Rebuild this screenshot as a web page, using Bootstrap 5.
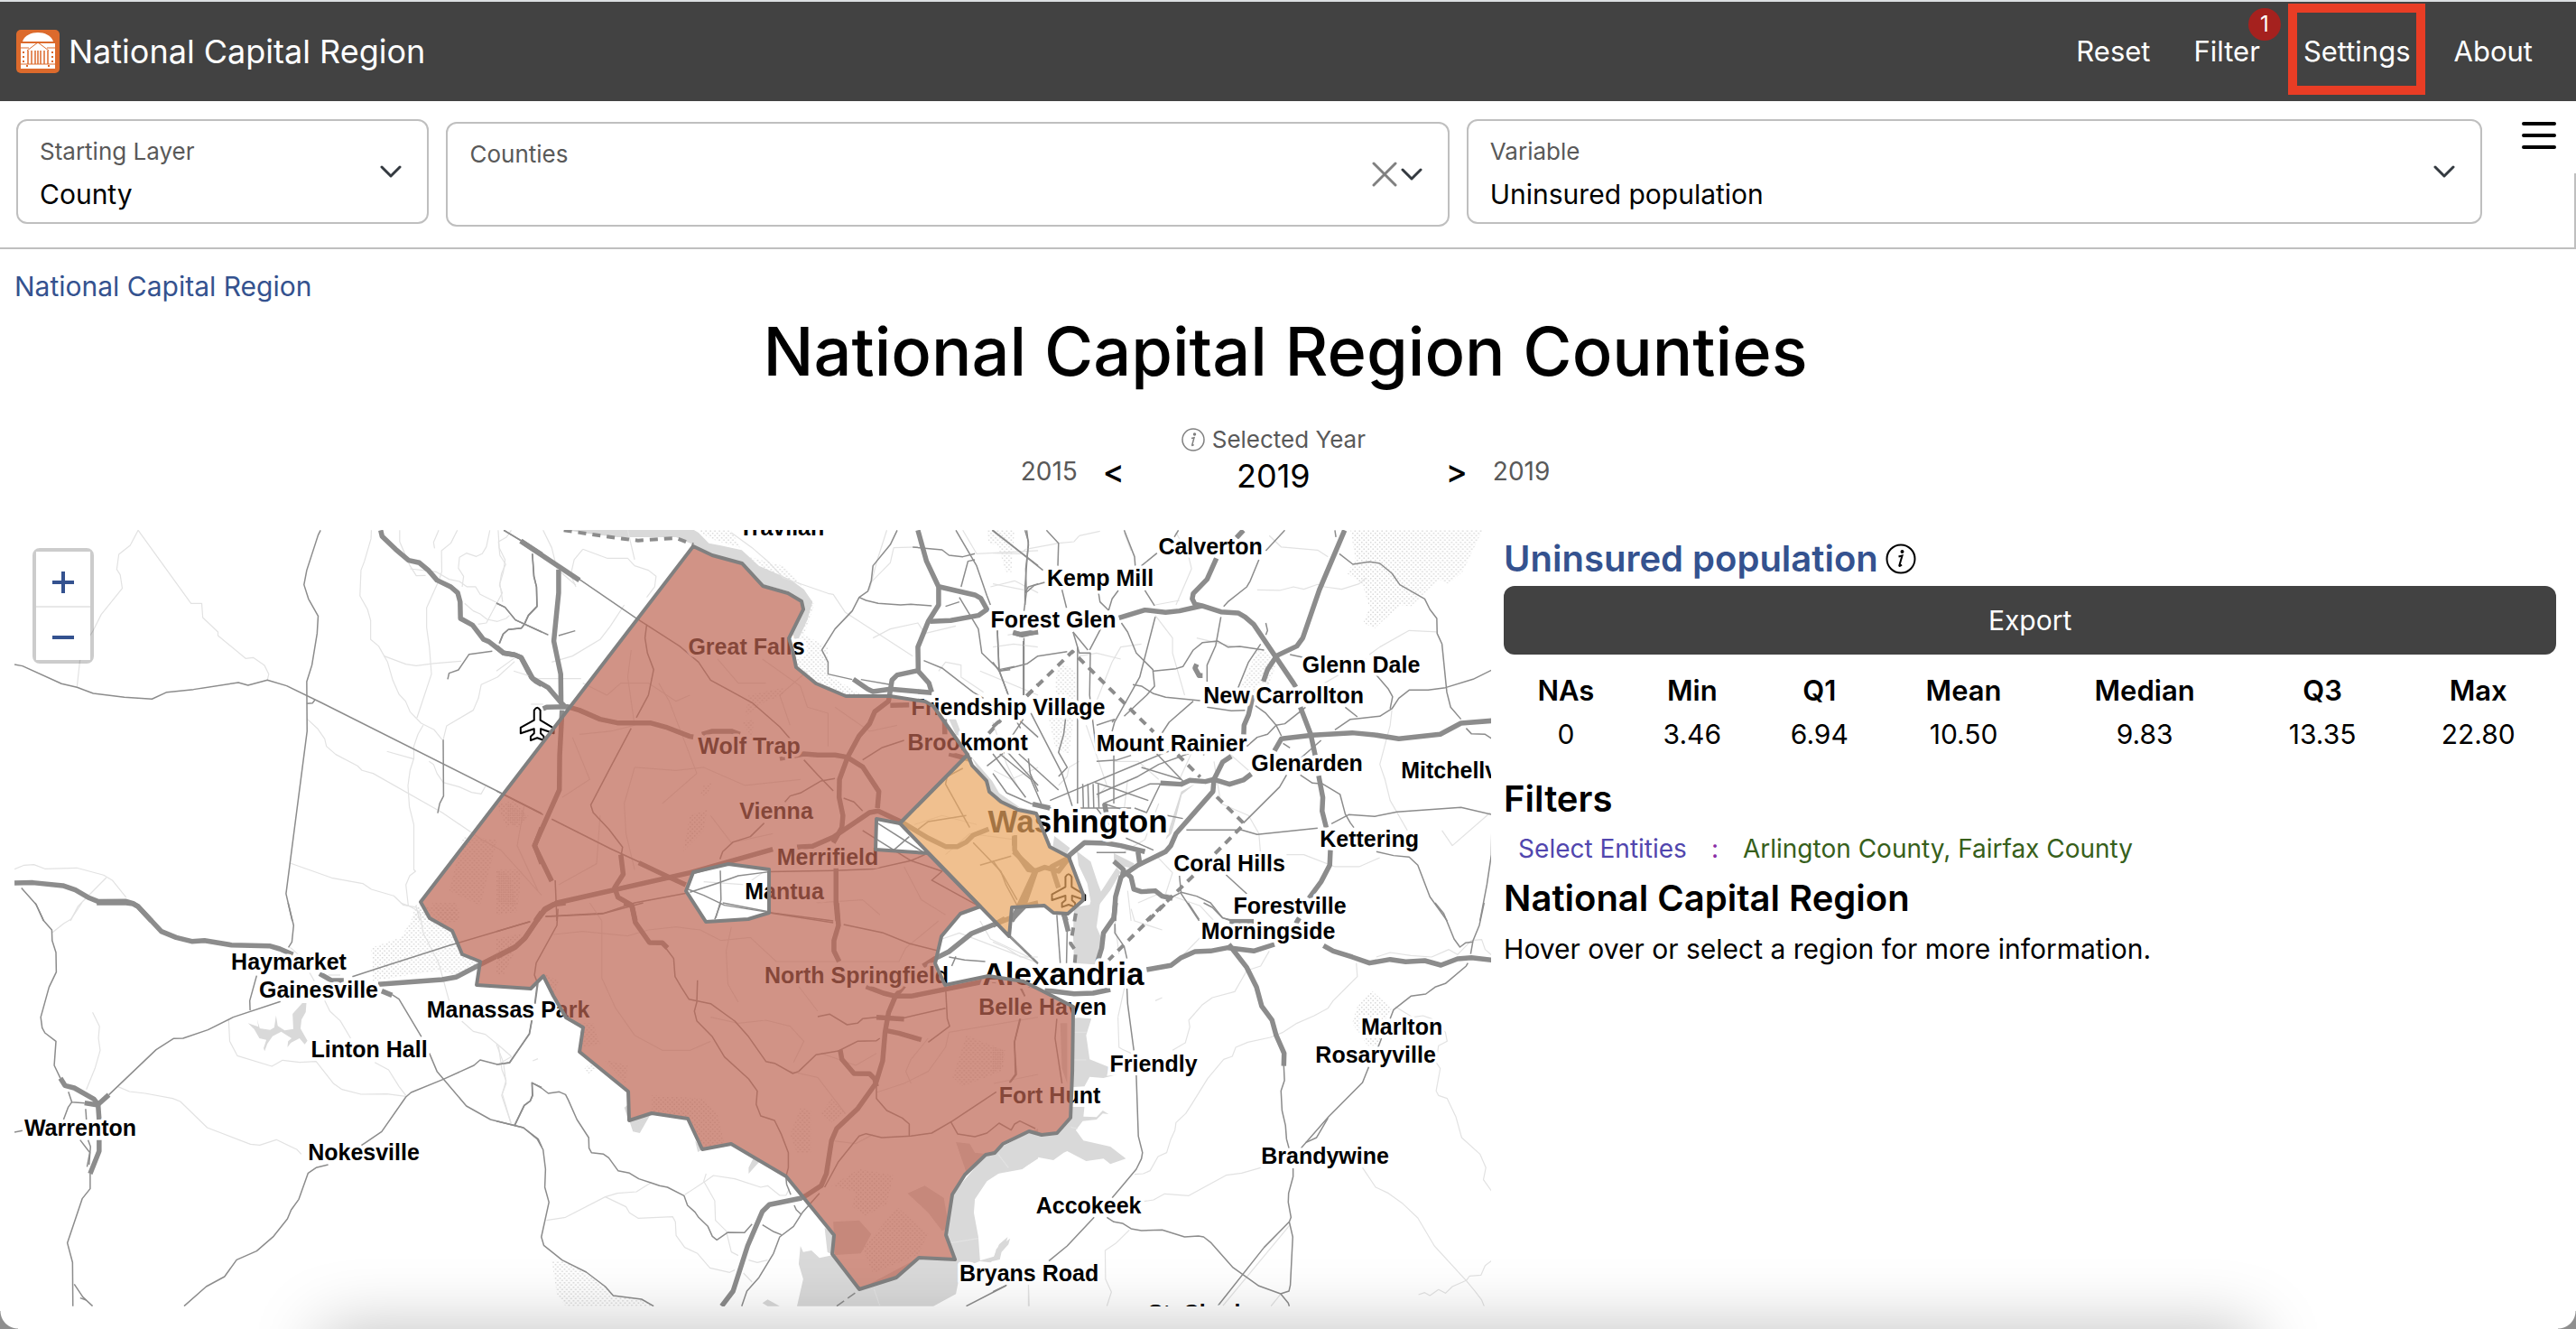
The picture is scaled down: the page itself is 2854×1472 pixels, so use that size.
<!DOCTYPE html>
<html lang="en">
<head>
<meta charset="utf-8">
<meta name="viewport" content="width=device-width, initial-scale=1">
<title>National Capital Region</title>
<link href="https://cdn.jsdelivr.net/npm/bootstrap@5.3.0/dist/css/bootstrap.min.css" rel="stylesheet">
<style>
  :root { --ink:#000; --muted:#595959; --line:#bfbfbf; --dark:#424242; --link:#34528f; }
  body { font-family: Inter, "Liberation Sans", sans-serif; font-size:30px; line-height:40px; color:var(--ink); background:#fff; }
  .topbar { background:var(--dark); height:112px; border-top:2px solid #dcdfe2; padding:0 18px; }
  .brand-text { font-size:36px; color:#fff; text-decoration:none; gap:10px; }
  .topbar .menu-btn { background:none; border:0; color:#fff; padding:0; font-size:31px; line-height:40px; }
  .menu-list { gap:48px; padding-right:30px; }
  .ringed { position:relative; }
  .ringed::after { content:""; position:absolute; top:-33px; left:-17px; right:-16px; height:101px; border:10px solid #e93d25; }
  .count { position:absolute; top:-28px; right:-23px; width:36px; height:36px; border-radius:50%; background:#a5211e; color:#fff; font-size:24px; line-height:36px; text-align:center; }
  .toolbar { border-bottom:2px solid var(--line); gap:19px; padding-left:18px; min-height:164px; }
  .field { border:2px solid var(--line); border-radius:12px; height:116px; margin-top:20px; padding:0 28px 0 24px; }
  .field-a { flex:401 1 0; } .field-b { flex:1054 1 0; margin-top:23px; } .field-c { flex:1068 1 0; }
  .field-body { padding-top:16px; height:112px; min-width:0; }
  .field label { font-size:26px; line-height:36px; color:var(--muted); }
  .field select, .field input { appearance:none; border:0; background:none; padding:0; width:100%; font-size:30px; line-height:40px; height:58px; color:#000; outline:0; }
  .plain { background:none; border:0; padding:0; line-height:1; display:flex; }
  .menu-toggle { padding:8px; margin:14px 0 16px 17px; }
  .side { width:85px; }
  .side-edge { border-right:2px solid var(--line); }
  .crumb { color:var(--link); text-decoration:none; }
  .page { padding:21px 22px 0 16px; }
  h1 { font-size:74px; line-height:96px; font-weight:500; }
  .years { margin-top:32px; margin-bottom:38px; }
  .year-end { font-size:28px; line-height:54px; color:var(--muted); }
  .step { background:none; border:0; padding:0; font-size:36px; line-height:54px; font-weight:500; width:24px; }
  .year-mid { width:356px; padding-right:26px; }
  .year-mid label { font-size:26px; line-height:36px; color:var(--muted); }
  .year-mid output { font-size:36px; line-height:44px; }
  .map-col { flex:0 0 58.1%; height:860px; position:relative; overflow:hidden; min-width:0; }
  .info-col { flex:1 1 0; min-width:0; padding-top:8px; }
  .split { gap:14px; }
  .map-col > svg { width:100%; height:100%; display:block; }
  .zoomer { position:absolute; left:20px; top:20px; width:68px; border:4px solid rgba(0,0,0,.2); border-radius:8px; background-clip:padding-box; }
  .zoomer button { display:flex; align-items:center; justify-content:center; width:100%; height:60px; border:0; background:#fff; padding:8px 0 0; }
  .zoomer button + button { border-top:2px solid #e8e8e8; }
  h2 { font-size:40px; line-height:48px; font-weight:600; }
  h2 a, h2 a:hover { color:var(--link); }
  .export { background:var(--dark); color:#fff; height:76px; border-radius:12px; border:0; margin-top:6px; }
  .stats { margin-top:16px; table-layout:fixed; text-align:center; }
  .stats th, .stats td { height:48px; padding:0; }
  .stats th { font-weight:600; font-size:31px; }
  .filter-row { font-size:28px; margin:11px 0; padding-left:16px; }
  .filter-row .what { color:#5146ae; } .filter-row .sep { color:#8a2da5; padding:0 27px; } .filter-row .val { color:#375f1b; }
  .roads polyline, .roads path { fill:none; vector-effect:non-scaling-stroke; stroke-linejoin:round; }
  .a polyline, polyline.a { stroke:#8c8c8c; stroke-width:5.5px; }
  .b polyline { stroke:#8c8c8c; stroke-width:1.5px; }
  .c polyline { stroke:#e2e2e2; stroke-width:1.2px; }
  .d polyline { stroke:#8c8c8c; stroke-width:4px; stroke-dasharray:9 7; }
  .roads .w { fill:#d9d9d9; }
  .roads .h { fill:url(#dots); }
  .roads .p { fill:#fff; stroke:#000; stroke-width:2px; }
  .towns text { font:bold 25px "Liberation Sans", sans-serif; text-anchor:middle; fill:#000; stroke:#fff; stroke-width:7px; stroke-linejoin:round; paint-order:stroke; }
  .towns text.big { font-size:35px; }
  .regions path { stroke:#808080; stroke-width:4px; stroke-linejoin:round; fill-rule:evenodd; fill-opacity:.7; }
  .dock-shade { position:fixed; top:100%; left:12.5%; right:12.5%; height:80px; box-shadow:0 0 75px rgba(0,0,0,.25); pointer-events:none; }
  .corner { position:fixed; bottom:0; width:20px; height:20px; pointer-events:none; }
  .corner-l { left:0; background:radial-gradient(circle at 100% 0, transparent 19px, #8f8f8f 20px); }
  .corner-r { right:0; background:radial-gradient(circle at 0 0, transparent 19px, #8f8f8f 20px); }
</style>
</head>
<body>
<nav class="topbar d-flex align-items-center justify-content-between">
  <a href="#" class="brand-text d-flex align-items-center">
    <svg width="48" height="48" viewBox="0 0 48 48" aria-hidden="true">
      <rect width="48" height="48" rx="5" fill="#dc6a2c"/>
      <path fill="#fff" d="M7 13C9 6 17 3 24 3s15 3 17 10zM5 15h38v28H5z"/>
      <path stroke="#dc6a2c" fill="none" d="M5 20h9M34 20h9M5 38h38M12 23L24 14l12 9"/>
      <path stroke="#dc6a2c" stroke-width="1.500" fill="none" d="M13 23v15M17 23v15M21 23v15M27 23v15M31 23v15M35 23v15M24 23v15"/>
      <path stroke="#dc6a2c" stroke-width="2" stroke-dasharray="2 3" fill="none" d="M8 24v12M40 24v12M12 39v4M36 39v4"/>
    </svg>National Capital Region</a>
  <div class="menu-list d-flex align-items-center">
    <button class="menu-btn" type="button">Reset</button>
    <button class="menu-btn position-relative" type="button">Filter<span class="count">1</span></button>
    <button class="menu-btn ringed" type="button">Settings</button>
    <button class="menu-btn" type="button">About</button>
  </div>
</nav>

<div class="toolbar d-flex align-items-start">
  <div class="field field-a d-flex align-items-center">
    <div class="field-body flex-grow-1 d-flex flex-column"><label for="layer">Starting Layer</label><select id="layer"><option>County</option></select></div>
    <svg width="24" height="16" viewBox="0 0 24 16" fill="none" stroke="#343a40" stroke-width="3" stroke-linecap="round" stroke-linejoin="round"><path d="M2 3l10 10L22 3"/></svg>
  </div>
  <div class="field field-b d-flex align-items-center">
    <div class="field-body flex-grow-1 d-flex flex-column"><label for="counties">Counties</label><input id="counties" type="text"></div>
    <div class="d-flex align-items-center gap-1">
      <button class="plain" type="button" aria-label="Clear"><svg width="28" height="28" viewBox="0 0 28 28" stroke="#808080" stroke-width="3" stroke-linecap="round"><path d="M2 2l24 24M26 2L2 26"/></svg></button>
      <button class="plain" type="button" aria-label="Open"><svg width="24" height="16" viewBox="0 0 24 16" fill="none" stroke="#343a40" stroke-width="3" stroke-linecap="round" stroke-linejoin="round"><path d="M2 3l10 10L22 3"/></svg></button>
    </div>
  </div>
  <div class="field field-c d-flex align-items-center">
    <div class="field-body flex-grow-1 d-flex flex-column"><label for="variable">Variable</label><select id="variable"><option>Uninsured population</option></select></div>
    <svg width="24" height="16" viewBox="0 0 24 16" fill="none" stroke="#343a40" stroke-width="3" stroke-linecap="round" stroke-linejoin="round"><path d="M2 3l10 10L22 3"/></svg>
  </div>
  <div class="side d-flex flex-column align-self-stretch">
    <button class="plain menu-toggle" type="button" aria-label="Menu"><svg width="38" height="34" viewBox="0 0 38 34" stroke="#000" stroke-width="4" stroke-linecap="round"><path d="M2 3h34M2 16h34M2 29h34"/></svg></button>
    <div class="side-edge flex-grow-1"></div>
  </div>
</div>

<main class="page">
  <a href="#" class="crumb d-block">National Capital Region</a>
  <h1 class="text-center mb-0 mt-1">National Capital Region Counties</h1>
  <div class="years d-flex justify-content-center align-items-end">
    <span class="year-end me-4">2015</span>
    <button class="step ms-1" type="button">&lt;</button>
    <div class="year-mid d-flex flex-column align-items-center">
      <label for="yr" class="d-flex align-items-center gap-2"><svg width="26" height="26" viewBox="0 0 26 26" fill="none" stroke="#808080" stroke-width="1.5"><circle cx="13" cy="13" r="12"/><path d="M11 11.500l3-.8-2.300 8.300q0 1 2-.5" /><circle cx="14.500" cy="7" r="1" fill="#808080"/></svg>Selected Year</label>
      <output id="yr">2019</output>
    </div>
    <button class="step me-1" type="button">&gt;</button>
    <span class="year-end ms-4">2019</span>
  </div>

  <div class="split d-flex">
    <div class="map-col">
      <svg viewBox="16 587 1636 860" preserveAspectRatio="xMidYMid slice" role="img" aria-label="Map of counties">
        <defs><pattern id="dots" width="5" height="5" patternUnits="userSpaceOnUse" patternTransform="scale(2.6 3)"><path d="M0 0h1.500v1.500h-1.500zM2.500 2.500h1.500v1.500h-1.500z" fill="#d8d8d8"/></pattern></defs>
        <g class="roads">
        <!-- north west -->
        <g transform="translate(0 570) scale(.3827 .3333)">
          <path class="h" d="M1195 1350L1210 1300 1330 1310 1330 1350zM1340 1070L1440 1080 1390 1300 1300 1250zM1440 1180L1510 1180 1500 1300 1440 1290zM1470 960L1530 1000 1500 1040 1470 1020z"/>
          <g class="c">
            <polyline points="400,52 377,102 344,132 338,182 348,200 354,245 293,332 270,385 240,440 231,488 223,572"/>
            <polyline points="400,52 553,295 584,295 587,342 631,390 631,402 711,478 733,475 765,500 778,530 774,550"/>
            <polyline points="1075,52 1074,80 1055,155 1045,185 1042,270 1064,315 1073,352 1073,415 1096,437 1122,490 1137,550 1155,597 1174,620 1187,655 1219,693 1257,715 1280,748"/>
            <polyline points="1157,52 1157,90 1187,170 1205,203 1232,202"/><polyline points="1270,52 1255,92 1258,112"/>
            <polyline points="1324,52 1305,95 1278,120 1279,190 1270,220 1235,310 1235,375 1243,440 1249,530 1207,675"/>
            <polyline points="1418,52 1408,107 1396,130 1379,139 1350,128 1330,142 1327,178 1342,205 1338,240"/>
            <polyline points="1480,52 1466,75 1443,90 1447,135 1464,165 1452,195 1446,235 1454,260 1437,297 1408,360 1384,364"/>
            <polyline points="1187,180 1262,190 1300,215 1330,222 1352,240 1377,240 1390,265 1437,292"/>
            <polyline points="1112,470 1175,497 1205,502 1255,495 1335,487"/><polyline points="1490,488 1440,540 1393,565 1385,610 1370,650 1293,702 1283,748"/>
            <polyline points="1345,295 1370,320 1390,330 1410,348 1440,355 1465,345 1475,335"/>
            <polyline points="890,680 920,712 940,745 945,770 972,797 1035,835 1048,850 1080,860 1280,990 1395,1080 1450,1115 1568,1265"/>
            <polyline points="1225,700 1210,730 1198,770 1198,810 1187,850 1181,900 1185,970 1198,1030 1198,1180 1203,1185 1186,1200 1175,1230 1182,1300"/>
            <polyline points="1120,787 1198,812"/><polyline points="1242,820 1255,830 1265,860 1283,890 1330,905 1365,923 1393,928 1405,903"/>
            <polyline points="840,1158 960,1207 1050,1226 1075,1245 1140,1267 1167,1297 1205,1305 1215,1350"/>
            <polyline points="42,1178 70,1165 98,1163 130,1177 222,1174 300,1198 325,1215 365,1272"/><polyline points="308,1206 240,1285 225,1303 204,1350"/>
          </g>
          <g class="b">
            <polyline points="42,498 65,503 178,562 223,574 270,594 360,607 440,613 483,590 560,581 690,558 718,567 774,550 830,569 930,625 1568,993"/>
            <polyline points="928,52 921,68 888,185 880,233 893,280 921,337 918,395 903,500 888,555 889,720 828,1260 846,1350"/>
            <polyline points="888,628 905,626 912,615"/>
            <polyline points="1458,52 1512,88"/><polyline points="1541,130 1546,205 1553,240 1555,305 1530,335 1518,365 1510,377 1472,382 1457,397 1446,428"/>
            <polyline points="1437,294 1462,308 1492,350 1568,390"/><polyline points="1425,454 1358,464 1327,516 1300,527 1296,547"/>
            <polyline points="1283,748 1284,935 1273,960 1267,992"/><polyline points="62,1241 105,1296 126,1350"/>
          </g>
          <g class="a">
            <polyline points="1102,52 1106,72 1145,115 1183,152 1214,160 1240,185 1265,218 1305,240 1325,260 1332,290 1333,345 1368,367 1400,415 1415,422 1458,460 1490,466 1508,475 1538,540 1550,553 1568,565"/>
            <polyline points="1508,88 1568,133"/><polyline points="42,1224 95,1223 182,1233 218,1247 255,1272 285,1286 365,1285 385,1292 400,1303 438,1350"/>
            <polyline points="1568,1040 1548,1100 1568,1160"/><polyline points="1568,1320 1550,1350"/>
          </g>
        </g>
        <!-- north centre -->
        <g transform="translate(550 570) scale(.3827 .3333)">
          <path class="w" d="M195 50L570 50 585 60 615 95 650 103 710 118 760 170 850 215 890 248 915 290 900 350 875 412 850 412 890 310 884 284 845 255 772 232 712 160 620 130 570 100 520 75 350 75 260 62z"/>
          <path class="h" d="M580 50L680 52 705 110 620 80zM730 140L830 170 900 250 860 220 790 190zM905 270L920 300 890 400 960 440 955 530 1060 600 1010 598 930 560 870 500 855 410 880 405zM1420 52L1500 52 1490 195 1475 190 1450 100 1425 95zM730 600L830 575 830 600 780 620 720 670zM710 690L745 680 740 740zM600 900L625 890 610 935 590 930zM0 960L60 950 90 1010 30 1040zM0 1180L40 1200 60 1320 0 1330zM560 1000L610 980 600 1050 540 1120z"/>
          <path class="w" d="M1310 680l20 0 18 55-14 6zM1375 805l60 80 20 40 60 48 45 12v15l-55-10-55-35-30-50z"/>
          <g class="c">
            <polyline points="5,52 8,110 25,150 20,190 10,230 18,290"/><polyline points="135,52 160,110 175,180 230,235"/>
            <polyline points="250,115 225,150 215,200 230,240"/><polyline points="250,115 320,145 380,145 400,170 440,185 462,205 458,240 435,275"/>
            <polyline points="370,300 330,370 300,415 220,470 160,490"/><polyline points="680,60 740,110 790,160 830,210 960,262 975,265 1010,325 1205,470"/>
            <polyline points="1090,410 1140,380 1220,360 1240,395 1330,370"/><polyline points="1280,520 1300,490 1345,500 1345,540 1410,590"/><polyline points="1400,520 1568,600"/><polyline points="1080,230 1140,160 1150,110 1220,108"/>
            <polyline points="380,52 400,150"/><polyline points="1130,52 1100,160 1080,250"/><polyline points="0,520 60,470"/><polyline points="100,630 135,630"/><polyline points="50,520 120,545 245,545"/>
            <polyline points="1350,52 1390,130 1568,120"/><polyline points="1430,240 1500,220 1568,260"/><polyline points="1480,400 1568,380"/>
            <polyline points="250,560 320,600 360,560 440,560 520,620 560,600"/><polyline points="390,450 380,540 400,700 330,720 240,730"/><polyline points="470,560 500,620 560,800 580,860 540,900 480,960"/>
            <polyline points="400,840 370,960 375,1060 400,1180"/><polyline points="400,840 520,850 600,840 720,900 880,880"/><polyline points="640,480 700,560 780,560"/><polyline points="770,480 880,570 900,640 960,660 960,770"/>
            <polyline points="220,740 270,880 190,940"/><polyline points="620,1000 680,1090 800,1060"/><polyline points="80,970 60,1100 120,1250"/><polyline points="300,1000 290,1160 180,1230"/><polyline points="860,1230 930,1290 1060,1280 1110,1330"/><polyline points="1180,1170 1230,1280 1300,1330"/><polyline points="900,520 820,600 850,700"/><polyline points="980,640 1080,720 1160,700"/>
            <polyline points="1568,840 1490,880 1440,850"/><polyline points="1210,1030 1290,1000 1390,1030"/><polyline points="1300,1130 1370,1060 1500,1080"/><polyline points="600,1220 720,1230 770,1190"/>
          </g>
          <g class="b">
            <polyline points="22,52 75,90"/><polyline points="240,215 405,345 530,437 585,490 620,550 740,625 820,705 850,745"/>
            <polyline points="104,130 108,205 116,240 117,305 92,335 80,365 72,377 34,382 19,397 8,428"/><polyline points="0,294 25,308 55,350 150,400"/><polyline points="180,402 228,386"/>
            <polyline points="435,365 430,410 437,460 455,515 440,600 405,675"/><polyline points="390,710 330,840 273,965 280,990 325,1045 365,1105 360,1140"/>
            <polyline points="0,918 135,997"/><polyline points="160,1012 330,1110 415,1155"/>
            <polyline points="1160,52 1140,100 1090,170 1085,220 1075,255 1050,275 1030,320 980,380 942,450 960,490 960,530 1030,548"/>
            <polyline points="1050,275 1070,285 1105,295 1170,300 1200,298 1260,303"/><polyline points="1300,305 1340,290"/><polyline points="1330,52 1390,170 1420,270 1430,300"/><polyline points="1385,150 1365,155 1345,240"/>
            <polyline points="1205,108 1290,117 1310,135 1350,140 1385,130"/><polyline points="1435,52 1568,170"/><polyline points="1530,52 1540,90 1530,240 1530,300"/><polyline points="1568,230 1540,240 1530,260"/>
            <polyline points="1340,275 1395,380 1405,460 1455,515 1500,505"/><polyline points="1450,385 1455,515 1480,595"/><polyline points="1527,410 1527,600"/>
            <polyline points="1237,485 1290,510 1380,590 1410,610"/><polyline points="1055,548 1140,565"/><polyline points="1180,750 1115,775 1060,815"/>
            <polyline points="890,815 930,865 975,918"/><polyline points="980,877 940,885 880,925 850,935 835,955"/><polyline points="1005,942 1035,955 1060,985"/><polyline points="775,1025 735,1070 685,1088 655,1120 647,1145"/>
            <polyline points="790,1187 980,1183 1090,1178 1200,1150 1240,1130"/><polyline points="1060,1050 1200,1150 1290,1185 1260,1215 1400,1303"/><polyline points="560,1255 640,1225 700,1200 790,1187"/><polyline points="648,1183 650,1280 635,1340"/><polyline points="555,1245 600,1265 660,1298 790,1322"/><polyline points="1103,1025 1240,1125"/><polyline points="1195,1070 1150,1115"/>
            <polyline points="550,1258 400,1290 310,1325 142,1335"/><polyline points="790,1322 975,1350"/><polyline points="170,1215 175,1350"/>
            <polyline points="1350,843 1305,870 1300,895 1370,1040"/><polyline points="1380,1090 1460,1185 1475,1230 1510,1305"/><polyline points="1400,1165 1490,1135"/><polyline points="1210,1055 1250,1020 1360,1000"/>
            <polyline points="1470,790 1420,835"/><polyline points="1540,810 1545,860 1568,920"/><polyline points="1480,790 1568,900"/><polyline points="1510,680 1568,740"/><polyline points="1525,680 1490,740"/>
          </g>
          <g class="a">
            <polyline points="70,88 240,218"/><polyline points="180,183 180,260 166,420 186,530 187,625 200,640"/><polyline points="0,440 20,460 52,466 72,475 105,545 150,575 187,625"/>
            <polyline points="135,645 145,640 205,638 240,650 300,680 350,692 445,692 490,706 560,737 570,739"/><polyline points="190,650 183,800 182,915 110,1100 160,1218"/>
            <polyline points="595,730 625,720 680,720 705,730"/><polyline points="820,810 890,795 930,799 980,799 1015,806 1060,838 1107,920 1103,975"/>
            <polyline points="1220,52 1245,155 1280,240 1280,300 1250,355 1220,440 1221,518 1160,533 1145,550 1135,620 1095,655 1080,695 1050,735 1017,805 993,880 992,940 1003,1000 1000,1040 975,1090"/>
            <polyline points="1283,240 1385,267 1402,278 1420,315 1395,335 1315,352 1255,355"/><polyline points="1221,520 1252,560 1260,590"/><polyline points="1033,547 1075,580 1090,588 1140,580 1260,592"/><polyline points="1140,634 1195,632"/>
            <polyline points="116,1350 140,1315 175,1290 560,1190 800,1112"/><polyline points="870,1105 915,1102 975,1072 1080,990 1105,985 1170,1020 1250,1075 1300,1103 1335,1103 1360,1088 1380,1065 1425,1045"/>
            <polyline points="412,1157 500,1205 548,1230"/><polyline points="360,1130 367,1195 342,1240 352,1272 392,1298 402,1350"/><polyline points="983,1175 983,1290 988,1350"/><polyline points="1500,1065 1500,1115 1540,1180 1568,1185"/><polyline points="1560,1190 1530,1290 1490,1350"/><polyline points="1495,392 1515,398 1568,390"/><polyline points="1297,680 1298,730"/><polyline points="1310,795 1375,815"/>
          </g>
          <g class="d"><polyline points="195,52 350,78 410,86 520,78 570,100"/><polyline points="1425,727 1460,683"/><polyline points="1535,602 1568,565"/></g>
          <path class="p" d="M109 650Q118 632 127 650V683L166 710V727L128 712V727L137 737V750L118 742 99 750V737L109 727V712L70 727V708L109 683Z"/>
        </g>
        <!-- north east -->
        <g transform="translate(1100 570) scale(.3827 .3333)">
          <path class="h" d="M1035 50L1418 50 1360 190 1320 230 1290 215 1210 305 1180 300 1105 378 1072 360 1090 310 1070 230 1025 195 1050 150zM765 450L790 450 820 500 790 590 710 595zM190 490L240 520 240 620 220 800 180 770 160 670 185 640 180 560z"/>
          <path class="w" d="M178 1068l45 40-10 22-40-25zM243 1118l40 35 20 70 10 30 45-80 12 15-30 60-40 60-20 90-12 27h-30l25-60 20-80-10-60-25-60zM350 1125l60 35-10 15-50-12zM500 1080l45-160 40-25-38 35-20 90-10 40zM0 930l60 50 60 12-60-5z"/>
          <g class="c">
            <polyline points="0,128 80,130 95,115"/><polyline points="250,70 235,90 190,95 95,115"/><polyline points="250,70 310,55"/><polyline points="0,230 90,250"/><polyline points="380,60 400,120"/><polyline points="530,60 565,130 575,180 530,300"/>
            <polyline points="800,70 835,108 940,118 970,140"/><polyline points="765,250 830,252 870,240 900,248 940,232 960,240 1010,248 1060,230 1080,210"/><polyline points="470,300 540,285"/><polyline points="470,335 520,410 520,460 555,600"/>
            <polyline points="1285,390 1205,385 1120,440 1090,465"/><polyline points="1155,650 1150,700 1120,830 1135,880 1150,950 1200,1050"/><polyline points="850,1130 900,1130 990,1170 1060,1170 1120,1140"/>
            <polyline points="370,480 300,460 250,470"/><polyline points="0,440 60,430 130,440"/><polyline points="430,430 370,440 345,490 300,620"/><polyline points="600,730 540,880"/><polyline points="480,960 440,1080 380,1120"/><polyline points="640,820 660,960 740,1000 770,1060 775,1130"/>
            <polyline points="0,690 40,830 70,900"/><polyline points="250,820 220,840 215,870 190,900"/><polyline points="390,880 380,980"/><polyline points="470,1130 520,1190 500,1260 600,1300 640,1350"/><polyline points="390,1250 400,1350"/><polyline points="420,1290 480,1260"/><polyline points="700,600 760,580 800,560"/><polyline points="350,820 420,820 480,880"/><polyline points="590,410 700,440"/><polyline points="1300,1050 1330,1100 1440,990"/>
            <polyline points="960,560 1080,480"/><polyline points="680,790 740,850"/><polyline points="270,700 330,900 300,940"/>
          </g>
          <g class="b">
            <polyline points="0,52 145,185"/><polyline points="98,52 103,100 95,180 97,260 90,320"/><polyline points="155,52 190,95 188,170"/><polyline points="380,52 393,90 410,140 412,170"/><polyline points="475,128 430,170"/><polyline points="537,52 525,75"/>
            <polyline points="200,250 213,310"/><polyline points="150,225 120,235 95,260"/><polyline points="305,255 310,290 335,318"/><polyline points="363,252 345,280 335,318"/><polyline points="440,252 468,303"/><polyline points="845,52 790,120"/><polyline points="770,150 745,220 735,240 680,290 668,305"/>
            <polyline points="990,52 993,75"/><polyline points="1003,130 1042,165 1090,157 1120,162 1155,195 1178,233 1250,280 1265,315 1285,345 1286,395 1300,430 1314,590 1325,640 1355,680"/>
            <polyline points="790,360 795,385 790,400"/><polyline points="372,360 390,390 415,460 463,515 468,570 445,600 380,670"/><polyline points="470,340 425,540 352,690 345,720"/>
            <polyline points="465,520 530,512 550,505 580,450 607,425 650,420 680,440 715,438 785,450"/><polyline points="660,340 645,435 620,500 620,555"/><polyline points="860,465 900,475"/><polyline points="775,430 740,490 710,575"/>
            <polyline points="405,565 430,570 465,595 500,607 600,618"/><polyline points="580,620 510,690 470,760"/><polyline points="620,640 690,652 730,650"/><polyline points="1100,520 1145,580 1157,605 1150,645"/><polyline points="1445,516 1390,547 1310,575 1260,583 1205,583 1175,610 1155,645 1120,670 1055,678 1035,680 990,715"/><polyline points="1020,640 1055,672"/>
            <polyline points="760,635 790,660 820,700 835,735"/><polyline points="905,640 845,695 820,700 795,730 765,740 735,770"/><polyline points="1370,710 1385,728 1425,730 1445,745"/>
            <polyline points="0,490 18,520 100,495 130,470 215,455"/><polyline points="13,385 18,520 45,600"/><polyline points="88,420 88,600"/><polyline points="18,520 50,515"/><polyline points="232,390 250,460 282,460 280,600 300,790"/><polyline points="245,440 245,960"/><polyline points="232,390 275,450"/><polyline points="330,340 280,450"/>
            <polyline points="110,660 200,860 230,970"/><polyline points="65,680 80,710"/><polyline points="210,680 205,730 190,790 215,840 190,870"/><polyline points="345,690 352,680 300,700"/><polyline points="350,800 350,960"/><polyline points="300,820 360,815 400,800"/>
            <polyline points="0,795 95,940"/><polyline points="20,795 110,880 140,960"/><polyline points="75,795 190,915"/><polyline points="0,860 40,925 110,960 170,975"/><polyline points="165,950 500,790"/><polyline points="300,930 420,870 480,830 600,780"/><polyline points="295,890 350,910 450,950"/><polyline points="260,895 262,975"/><polyline points="275,895 277,975"/><polyline points="290,895 292,975"/><polyline points="305,895 307,975"/>
            <polyline points="375,980 320,960 455,895 490,895"/><polyline points="410,975 445,990 485,895"/><polyline points="430,840 545,880"/><polyline points="470,790 550,885"/><polyline points="615,730 610,800"/><polyline points="240,975 400,975"/><polyline points="505,1000 550,1010"/><polyline points="560,1048 720,1048 765,1063 940,1042"/>
            <polyline points="850,865 830,905 725,1025"/><polyline points="890,865 925,892 955,895 1005,930 1020,995 1035,1025 1045,1040"/><polyline points="980,1027 1030,997 1105,1003 1170,988 1355,973 1445,997 1443,1130 1430,1230 1410,1350"/>
            <polyline points="1110,1120 1160,1133 1205,1138 1230,1165 1265,1270 1315,1350"/><polyline points="840,760 860,775"/><polyline points="950,750 890,810"/><polyline points="300,1123 385,1123"/><polyline points="385,1075 465,1115"/><polyline points="300,975 350,1050"/>
            <polyline points="540,1200 545,1260 597,1350"/><polyline points="675,1197 735,1260"/><polyline points="520,1270 545,1255 590,1268 630,1290 665,1340 700,1350"/><polyline points="350,1330 355,1350"/><polyline points="0,1150 30,1200 70,1280"/><polyline points="500,790 560,770"/><polyline points="140,1000 140,1050"/>
          </g>
          <g class="a">
            <polyline points="725,52 705,77"/><polyline points="647,145 620,215 580,262 577,280 585,298 605,303 660,323 710,327 730,340 755,365 870,560 877,573"/><polyline points="365,343 440,317 500,325 540,320 605,303"/>
            <polyline points="1018,52 945,250 897,410 880,437 825,467 817,477 795,515 783,555"/><polyline points="753,600 740,665 727,700 726,730"/><polyline points="890,640 920,730 933,800"/><polyline points="943,868 955,940 953,985 965,1040"/><polyline points="977,1115 975,1165 950,1220 915,1275"/>
            <polyline points="1445,685 1355,693 1295,730 1175,745 1105,732 1040,725 925,733 835,745 815,785"/><polyline points="748,862 725,882 685,896 640,880 615,887 570,883 545,896 485,892"/><polyline points="690,803 665,822 640,880 637,920 530,1060 515,1100 500,1120 420,1165 375,1200 385,1190 400,1205 408,1245 430,1253 470,1250 490,1268 520,1275"/><polyline points="372,1200 355,1270 350,1350"/>
            <polyline points="218,1135 265,1090 330,1092 370,1100 440,1120"/><polyline points="420,1120 425,1160"/><polyline points="350,1152 378,1180 375,1200"/><polyline points="115,962 165,975"/><polyline points="323,960 328,990"/><polyline points="62,1070 62,1100"/><polyline points="60,1120 120,1185 150,1172 190,1185 220,1140 170,1170 190,1240"/><polyline points="122,1185 55,1350"/><polyline points="60,392 85,400 128,388"/><polyline points="590,497 585,510 597,535 607,535"/><polyline points="205,1327 212,1350"/>
          </g>
          <g class="d"><polyline points="98,603 230,455 410,660 465,722"/><polyline points="535,798 600,872"/><polyline points="648,938 728,1028 640,1130"/><polyline points="580,1200 445,1350"/><polyline points="0,705 20,685"/></g>
          <path class="p" transform="translate(101 554)" d="M109 650Q118 632 127 650V683L166 710V727L128 712V727L137 737V750L118 742 99 750V737L109 727V712L70 727V708L109 683Z"/>
        </g>
        <!-- south west -->
        <g transform="translate(0 1000) scale(.3827 .3333)">
          <path class="w" d="M875 333h12l-2 30-12 25-3 30 20 40-8 12-15-20-25 15-10 15 2-20 10-10-30-22-25 15-15 25-8 25-3-10 8-28-20-5-15-30-18-20 30 12-4-25 8 30 30 5 12-8 5-40 5 35 20 15 25-5-2-50z"/>
          <path class="h" d="M1205 0L1225 20 1245 55 1308 95 1338 170 1390 200 1320 240 1270 225 1180 240 1080 260 1075 150 1160 115 1190 60z"/>
          <path class="h" d="M1250 0h70l10 60-50 10z"/>
          <g class="c">
            <polyline points="237,0 205,55 185,68 152,98"/><polyline points="268,364 288,410 285,450 290,490 275,550 250,620"/><polyline points="340,610 375,627 420,633 500,650 522,660 600,747 725,802 752,805 800,787 860,820 872,835"/>
            <polyline points="662,390 665,460 687,508 787,543 818,523 868,530 915,527 965,600 990,620 1045,636 1120,635 1175,643"/><polyline points="940,325 955,360 985,392 1015,450"/><polyline points="1085,530 1125,555 1155,610 1175,640"/><polyline points="840,148 870,178 910,260"/><polyline points="1215,30 1225,100 1270,200 1300,325"/>
            <polyline points="1337,393 1370,427 1405,437 1445,475 1480,510"/><polyline points="1443,475 1453,555 1465,590 1454,635 1480,735"/><polyline points="1160,0 1183,10 1215,30"/><polyline points="950,240 985,240"/>
          </g>
          <g class="b">
            <polyline points="102,0 127,60 150,90 151,125 162,165 163,230 142,280 118,380 122,415 130,432 162,460 157,540 175,583"/><polyline points="834,0 850,75 845,130 835,148"/><polyline points="743,242 723,325 724,357"/><polyline points="812,328 675,380 602,422 530,450 502,451 452,488 315,638"/>
            <polyline points="1020,245 1100,215 1300,142 1535,62"/><polyline points="1135,305 1155,320 1220,445"/><polyline points="1243,500 1265,560 1350,675 1420,720 1515,747 1558,785 1568,810"/><polyline points="1555,270 1548,335"/><polyline points="1540,390 1533,435 1475,530 1440,537 1390,522 1372,540 1282,587 1190,630 1175,645 1105,760 1058,797 1045,807"/><polyline points="950,870 915,880 892,898 865,985 843,1020 832,1050 792,1108 743,1157 685,1186 650,1242 597,1275 533,1340"/>
            <polyline points="1490,740 1518,673 1535,658 1541,640 1540,598 1568,613"/><polyline points="198,628 208,662 245,665"/><polyline points="208,662 197,680 184,720"/><polyline points="248,685 250,720"/><polyline points="232,788 260,830 252,877"/><polyline points="255,788 262,810 258,870"/><polyline points="42,762 65,757"/><polyline points="261,900 261,950 238,983 195,1130 210,1195 211,1340"/><polyline points="215,1267 240,1310 268,1340"/><polyline points="232,1313 250,1320"/>
          </g>
          <g class="a">
            <polyline points="280,0 365,0 385,3 400,12 467,95 510,115 555,128 592,125 670,140 780,143 810,153 848,172"/><polyline points="925,235 958,257 995,258"/><polyline points="1095,271 1280,255 1320,247 1390,205 1490,147 1520,117 1568,35"/><polyline points="1105,293 1135,307"/>
            <polyline points="175,583 188,607 215,615 272,652 284,670 315,638"/><polyline points="245,665 284,672 287,720"/><polyline points="287,788 287,825 261,900"/>
          </g>
        </g>
        <!-- south centre -->
        <g transform="translate(550 1000) scale(.3827 .3333)">
          <path class="w" d="M1417 837L1568 750 1568 850 1520 885 1480 880 1420 925 1385 985 1382 1030 1395 1110 1400 1190 1345 1215 1330 1300 1265 1340 870 1340 888 1250 875 1200 880 1140 888 1160 912 1155 935 1180 975 1170 1050 1285 1222 1180 1327 1185 1302 1103 1320 968zM950 1080l25 20-2 70-15-10zM370 680l12-10v50zM385 725l60-20-20 40-10 20-20-5zM575 790l20 30-12 8zM745 845l20 10-35 45v-20zM1395 1190l45-15 15-40 25-25-5 20-20 25-5 25-20 15zM770 1330l15-12 35 22h-35zM1330 795l40 5 15 30 35 5-60 60-15-50z"/>
          <path class="w" d="M975 1060l75-5 35 45-30 65-75 5zM1190 965l50-25 55 40 15 100-20 10-40-60z"/>
          <path class="h" d="M160 1190L200 1190 310 1270 340 1305 430 1320 455 1340 200 1340 175 1300zM255 550l20-20 10 20-20 20zM390 728l50-15-20 40zM450 640L600 650 640 700 660 800 600 815 560 712 450 695zM240 400L280 400 300 470 245 480zM310 520L380 540 375 600zM880 680L910 690 910 830 870 830 850 770zM970 650L1010 700 970 730 940 700zM1360 440L1470 490 1460 560 1350 610 1320 580zM1050 885L1150 905 1130 1000 1070 1040 1030 1010 1040 960 970 940zM1160 1010L1250 1100 1220 1170 1090 1230 1060 1150zM0 120L80 100 20 240 0 240zM130 230L180 260 165 310z"/>
          <g class="c">
            <polyline points="145,1055 200,1045 315,977 350,965 405,960 447,930"/><polyline points="315,977 375,1010 385,1030 410,1048 510,1043 518,1060 520,1105 545,1145 582,1165 618,1213 675,1228 690,1220"/><polyline points="545,970 605,925 628,906 690,917 765,945 785,940 820,972 838,972 848,950"/><polyline points="607,900 600,925 632,990 634,1055 665,1090 680,1160 700,1172"/><polyline points="730,1187 755,1195 785,1187"/><polyline points="715,1230 740,1260"/>
            <polyline points="0,470 20,530 28,600 15,640 43,735"/><polyline points="105,525 120,518"/><polyline points="0,540 45,510"/><polyline points="1540,1270 1540,1340"/><polyline points="1455,835 1483,880"/><polyline points="1315,1130 1395,1115"/><polyline points="1093,1283 1110,1340"/>
            <polyline points="165,105 250,95 380,110 440,90 520,80 590,90 650,125 735,115 810,195 1165,195 1185,150 1280,60"/><polyline points="270,0 305,60 305,250 345,350 400,440 480,490 560,490 620,460"/><polyline points="680,80 665,160 670,270 700,330"/><polyline points="620,380 700,400 780,390 850,410 890,460 860,530"/><polyline points="870,270 930,360"/><polyline points="940,500 1040,540 1100,500"/><polyline points="1250,450 1200,520 1185,560 1200,600"/><polyline points="1100,630 1180,600 1250,560 1300,480 1310,430 1568,380"/><polyline points="850,560 930,580 1010,700"/><polyline points="970,790 1040,800 1090,770"/><polyline points="1440,600 1568,570"/>
            <polyline points="1290,120 1340,100 1568,200"/><polyline points="1400,60 1430,120 1540,180"/>
          </g>
          <g class="b">
            <polyline points="0,725 78,747 118,785 135,820 142,885 140,945 152,995 130,1110 137,1138 190,1187 260,1227 315,1275 338,1305 420,1317 455,1340"/><polyline points="52,740 80,673 98,658 105,640 103,598 130,615 150,633 182,628 200,637 208,655 233,720 267,780 268,815 275,830 310,835 325,847 352,890 385,898 412,917 447,930 472,940 495,945 543,973 553,1005 575,1028 585,1045 612,1075 625,1108 638,1120 670,1095 718,1096 740,1067"/>
            <polyline points="770,1070 803,1093 825,1103"/><polyline points="935,965 885,1030 860,1075 820,1110 802,1165 760,1245 725,1290 710,1340"/><polyline points="862,1005 868,1020 882,1035"/><polyline points="838,910 840,935 852,970"/><polyline points="1475,1272 1360,1340"/>
            <polyline points="178,20 175,75 115,200 110,240 120,270 112,335"/><polyline points="102,390 95,435 38,532 0,537"/><polyline points="0,95 97,62"/><polyline points="142,46 305,37 425,0"/><polyline points="650,0 640,30 632,55"/><polyline points="655,0 790,30"/>
            <polyline points="490,150 513,185 517,245 535,280 557,320 620,335 690,393 730,445 780,527 805,533 858,567 875,560 925,505 990,492 1045,460 1100,458 1110,450"/><polyline points="582,257 580,330 573,360 580,392 625,445 660,512 730,585 755,625 752,670 765,708 805,723 825,770 845,830 845,880 838,910"/>
            <polyline points="790,33 975,66"/><polyline points="1005,72 1120,100 1195,135 1275,158"/><polyline points="1300,275 1305,385 1312,410 1250,463"/><polyline points="1300,350 1170,385"/><polyline points="1100,380 1060,385 1045,400 1015,405 965,370 930,378"/><polyline points="1100,605 1100,650 1130,690 1175,715 1195,735 1195,775"/><polyline points="950,945 990,860 1050,775 1070,767 1115,780 1200,775 1260,765 1320,725 1447,628"/><polyline points="1315,727 1335,768 1385,777 1420,765 1455,732 1490,755 1500,735 1515,725 1560,750"/><polyline points="1515,385 1500,460 1502,570 1485,597"/>
            <polyline points="1310,180 1355,190 1415,195"/><polyline points="1330,178 1318,210"/><polyline points="1488,110 1568,200"/><polyline points="1520,285 1530,310"/>
          </g>
          <g class="a">
            <polyline points="0,180 55,147 80,120 140,20 165,5 200,0"/><polyline points="370,0 392,10 402,65 443,132 480,133 495,150"/><polyline points="985,0 990,75 977,125 977,160 992,195"/>
            <polyline points="1568,0 1530,10 1500,45 1440,72 1375,102 1310,162 1270,185 1235,210"/><polyline points="1070,278 1120,300 1155,310 1200,310 1425,258 1500,262 1568,280"/><polyline points="1180,275 1155,310 1135,365 1125,430 1118,525 1098,600 1045,685 985,750 970,790 955,900 940,940 900,970 880,982 790,1003 770,1025 727,1140 685,1290 652,1340"/>
            <polyline points="1100,380 1180,386"/><polyline points="1130,425 1165,433 1230,455"/><polyline points="995,488 1000,520 1035,567 1080,568 1095,585 1100,610"/>
          </g>
          <g class="b"><polyline stroke-dasharray="10 5" points="985,1340 1050,1287"/></g>
        </g>
        <!-- south east -->
        <g transform="translate(1100 1000) scale(.3827 .3333)">
          <path class="w" d="M235 15L310 0 300 80 315 120 295 205 235 200 232 100zM232 380L285 385 270 440 280 520 335 545 330 575 360 570 320 582 280 578 265 610 232 612zM228 678L265 678 262 710 300 712 318 690 335 702 318 700 300 720 260 725 240 755 262 790 340 810 385 850 340 868 320 850 270 858 215 825 205 830 175 855 130 845 85 885 0 903 0 832 105 758 145 773 185 768 225 718z"/>
          <path class="w" d="M0 1190l10-40 40-35-5 20-20 25-5 25zM195 400h20v200l-15-50z"/>
          <path class="h" d="M1095 290L1155 350 1140 380 1115 475 1085 475 1040 400 1055 345zM0 480l35 10-5 60-30 10zM1020 1340z"/>
          <g class="c">
            <polyline points="353,60 365,170"/><polyline points="400,20 410,60 490,90"/><polyline points="600,115 545,180 520,200"/><polyline points="800,160 775,210 735,225 700,295 635,315 605,340 567,390 570,412 557,465 520,490"/>
            <polyline points="1052,200 1055,245 1020,285 985,325 970,350 930,375 880,400 840,430 803,447 738,463 703,480 693,510 668,520 622,583 575,670 558,700 530,730 527,755 515,785 503,830 478,843 455,890 435,900 410,902"/>
            <polyline points="362,380 365,480 375,487 400,500"/><polyline points="385,260 362,380"/><polyline points="470,325 490,315"/><polyline points="1110,180 1150,165 1210,175 1270,180 1320,155 1345,172 1385,125 1415,122 1425,155 1445,175"/><polyline points="1165,345 1215,380 1245,375 1270,385 1290,415 1310,430 1315,460 1290,475 1283,530 1295,550 1283,625 1290,640 1315,650 1340,710 1357,780 1410,835 1427,880 1420,920 1445,960"/>
            <polyline points="1070,880 1108,945 1145,965 1187,1000 1230,1047 1278,1140 1370,1255 1395,1290 1415,1320 1422,1340"/><polyline points="1445,1188 1425,1205 1413,1237 1380,1240 1370,1255 1330,1275 1310,1297 1290,1285 1265,1305 1250,1295 1232,1302"/><polyline points="437,992 465,987 497,967 567,973 675,905 720,898 775,880"/>
            <polyline points="395,1087 355,1132 325,1155 326,1250 343,1293 330,1340"/><polyline points="103,1270 105,1340"/><polyline points="860,1070 665,1340"/><polyline points="833,1300 805,1340"/><polyline points="0,130 40,150 80,180 130,180"/><polyline points="232,430 270,430"/><polyline points="232,522 270,522"/><polyline points="225,745 245,750"/><polyline points="15,835 45,880"/>
          </g>
          <g class="b">
            <polyline points="388,285 390,335 408,490"/><polyline points="415,573 421,775 433,830 430,850 415,885 375,940 345,980"/><polyline points="293,1045 215,1140 162,1190"/><polyline points="40,1270 0,1292"/><polyline points="330,1045 350,1060 375,1065 400,1083 430,1089 490,1087 555,1110 595,1107 610,1110 632,1130 695,1212 770,1273 833,1299 855,1330 858,1340"/>
            <polyline points="842,540 844,590 834,625 837,690 847,740 850,785 857,815"/><polyline points="869,882 869,910 856,965 855,995 863,1045 858,1060 868,1110 861,1270 857,1290 833,1299"/><polyline points="858,1060 785,1145 652,1338"/>
            <polyline points="1375,200 1370,210 1310,268 1280,280 1253,303 1210,310 1160,355 1150,385"/><polyline points="1125,450 1115,480"/><polyline points="1088,545 1070,597 972,710 892,815"/><polyline points="970,715 937,780 905,797"/><polyline points="1422,0 1408,75 1390,125 1383,170"/><polyline points="1280,0 1305,35 1335,120 1352,147 1368,133 1390,130"/>
            <polyline points="565,0 597,55"/><polyline points="610,0 635,15 665,50 690,60"/><polyline points="353,70 353,100 380,145 388,185"/><polyline points="185,40 195,200"/><polyline points="203,40 215,95 213,200"/><polyline points="45,110 130,203"/><polyline points="80,285 92,310"/><polyline points="185,385 180,450 200,600"/><polyline points="80,385 62,465 68,570 50,597"/>
          </g>
          <g class="a">
            <polyline points="445,222 515,208 545,182 585,162 630,160 680,149 755,160 815,138"/><polyline points="685,62 755,62"/><polyline points="683,138 735,215 763,280 778,343 808,390 820,440 843,500 842,542"/><polyline points="957,142 985,160 1040,180 1090,200 1150,188 1195,196 1250,192 1297,207 1345,186 1385,182 1445,190"/><polyline points="887,50 877,68"/>
            <polyline points="355,0 350,50 320,100 315,150 303,195"/><polyline points="150,290 235,302 290,300 340,288"/><polyline points="205,35 218,95"/><polyline points="0,75 35,52"/>
          </g>
          <g class="d"><polyline points="497,5 335,190"/><polyline points="240,35 225,135 240,160 237,200"/></g>
        </g>
        </g>
        <g class="towns">
          <text x="866" y="593">Travilah</text><text x="1341" y="614">Calverton</text><text x="1219" y="649">Kemp Mill</text><text x="1167" y="695">Forest Glen</text><text x="827" y="725">Great Falls</text><text x="1508" y="745">Glenn Dale</text><text x="1422" y="779">New Carrollton</text><text x="1117" y="792">Friendship Village</text><text x="1072" y="831">Brookmont</text><text x="1298" y="832">Mount Rainier</text><text x="830" y="835">Wolf Trap</text><text x="1448" y="854">Glenarden</text><text x="1623" y="862">Mitchellville</text><text x="860" y="907">Vienna</text><text class="big" x="1194" y="922">Washington</text><text x="1517" y="938">Kettering</text><text x="917" y="958">Merrifield</text><text x="1362" y="965">Coral Hills</text><text x="869" y="996">Mantua</text><text x="1429" y="1012">Forestville</text><text x="1405" y="1040">Morningside</text><text x="320" y="1074">Haymarket</text><text class="big" x="1178" y="1091">Alexandria</text><text x="949" y="1089">North Springfield</text><text x="353" y="1105">Gainesville</text><text x="1155" y="1124">Belle Haven</text><text x="563" y="1127">Manassas Park</text><text x="1553" y="1146">Marlton</text><text x="409" y="1171">Linton Hall</text><text x="1524" y="1177">Rosaryville</text><text x="1278" y="1187">Friendly</text><text x="1163" y="1222">Fort Hunt</text><text x="89" y="1258">Warrenton</text><text x="403" y="1285">Nokesville</text><text x="1468" y="1289">Brandywine</text><text x="1206" y="1344">Accokeek</text><text x="1140" y="1419">Bryans Road</text><text x="1337" y="1463">St. Charles</text>
        </g>
        <g class="regions">
          <path fill="#be6553" d="M768 605L789 615 822 624 845 649 873 657 888 666 890 675 874 707 878 720 882 739 904 757 937 771 986 771 1025 777 1034 782 1072 836 997 912 971 907 970 941 1028 945 1086 1004 1064 1012 1043 1037 1036 1067 1047 1091 1095 1081 1134 1087 1189 1115 1188 1187 1186 1238 1171 1255 1154 1257 1140 1253 1111 1267 1102 1277 1092 1279 1069 1301 1055 1323 1048 1368 1058 1395 1018 1393 993 1415 952 1428 922 1389 924 1368 889 1325 871 1303 810 1267 778 1273 762 1239 722 1233 697 1241 696 1209 642 1165 646 1138 627 1127 613 1103 602 1081 588 1095 528 1091 532 1065 512 1057 501 1031 476 1017 466 999zM768 966L760 987 782 1021 829 1018 852 1011 852 963 807 957z"/>
          <path fill="#e9a560" d="M1072 836L1077 848 1093 865 1096 877 1109 888 1128 897 1148 901 1163 938 1184 949 1200 991 1200 997 1183 1012 1167 1011 1157 1003 1121 1005 1118 1037 1086 1004 997 912z"/>
        </g>
      </svg>
      <div class="zoomer">
        <button type="button" aria-label="Zoom in"><svg width="26" height="26" viewBox="0 0 26 26" stroke="#34528f" stroke-width="4"><path d="M13 1v24M1 13h24"/></svg></button>
        <button type="button" aria-label="Zoom out"><svg width="26" height="26" viewBox="0 0 26 26" stroke="#34528f" stroke-width="4"><path d="M1 13h24"/></svg></button>
      </div>
    </div>

    <section class="info-col">
      <h2 class="mb-0 d-flex align-items-center gap-2"><a href="#" class="text-decoration-none">Uninsured population</a>
        <svg width="34" height="34" viewBox="0 0 34 34" fill="none" stroke="#000" stroke-width="2"><circle cx="17" cy="17" r="15.500"/><path d="M14.500 14.500l4-1-3.200 11q0 1.200 2.700-1"/><circle cx="18.500" cy="9" r="1" fill="#000"/></svg></h2>
      <button type="button" class="export w-100">Export</button>
      <table class="stats w-100">
        <colgroup><col style="width:11.8%"><col style="width:12.2%"><col style="width:12%"><col style="width:15.4%"><col style="width:19%"><col style="width:14.8%"><col style="width:14.8%"></colgroup>
        <thead><tr><th>NAs</th><th>Min</th><th>Q1</th><th>Mean</th><th>Median</th><th>Q3</th><th>Max</th></tr></thead>
        <tbody><tr><td>0</td><td>3.46</td><td>6.94</td><td>10.50</td><td>9.83</td><td>13.35</td><td>22.80</td></tr></tbody>
      </table>
      <h2 class="mb-0 mt-4">Filters</h2>
      <div class="filter-row d-flex"><span class="what">Select Entities</span><span class="sep">:</span><span class="val">Arlington County, Fairfax County</span></div>
      <h2 class="mb-2">National Capital Region</h2>
      <p class="mb-0 pt-1">Hover over or select a region for more information.</p>
    </section>
  </div>
</main>
<div class="dock-shade"></div><div class="corner corner-l"></div><div class="corner corner-r"></div>
<script src="https://cdn.jsdelivr.net/npm/bootstrap@5.3.0/dist/js/bootstrap.bundle.min.js"></script>
</body>
</html>
